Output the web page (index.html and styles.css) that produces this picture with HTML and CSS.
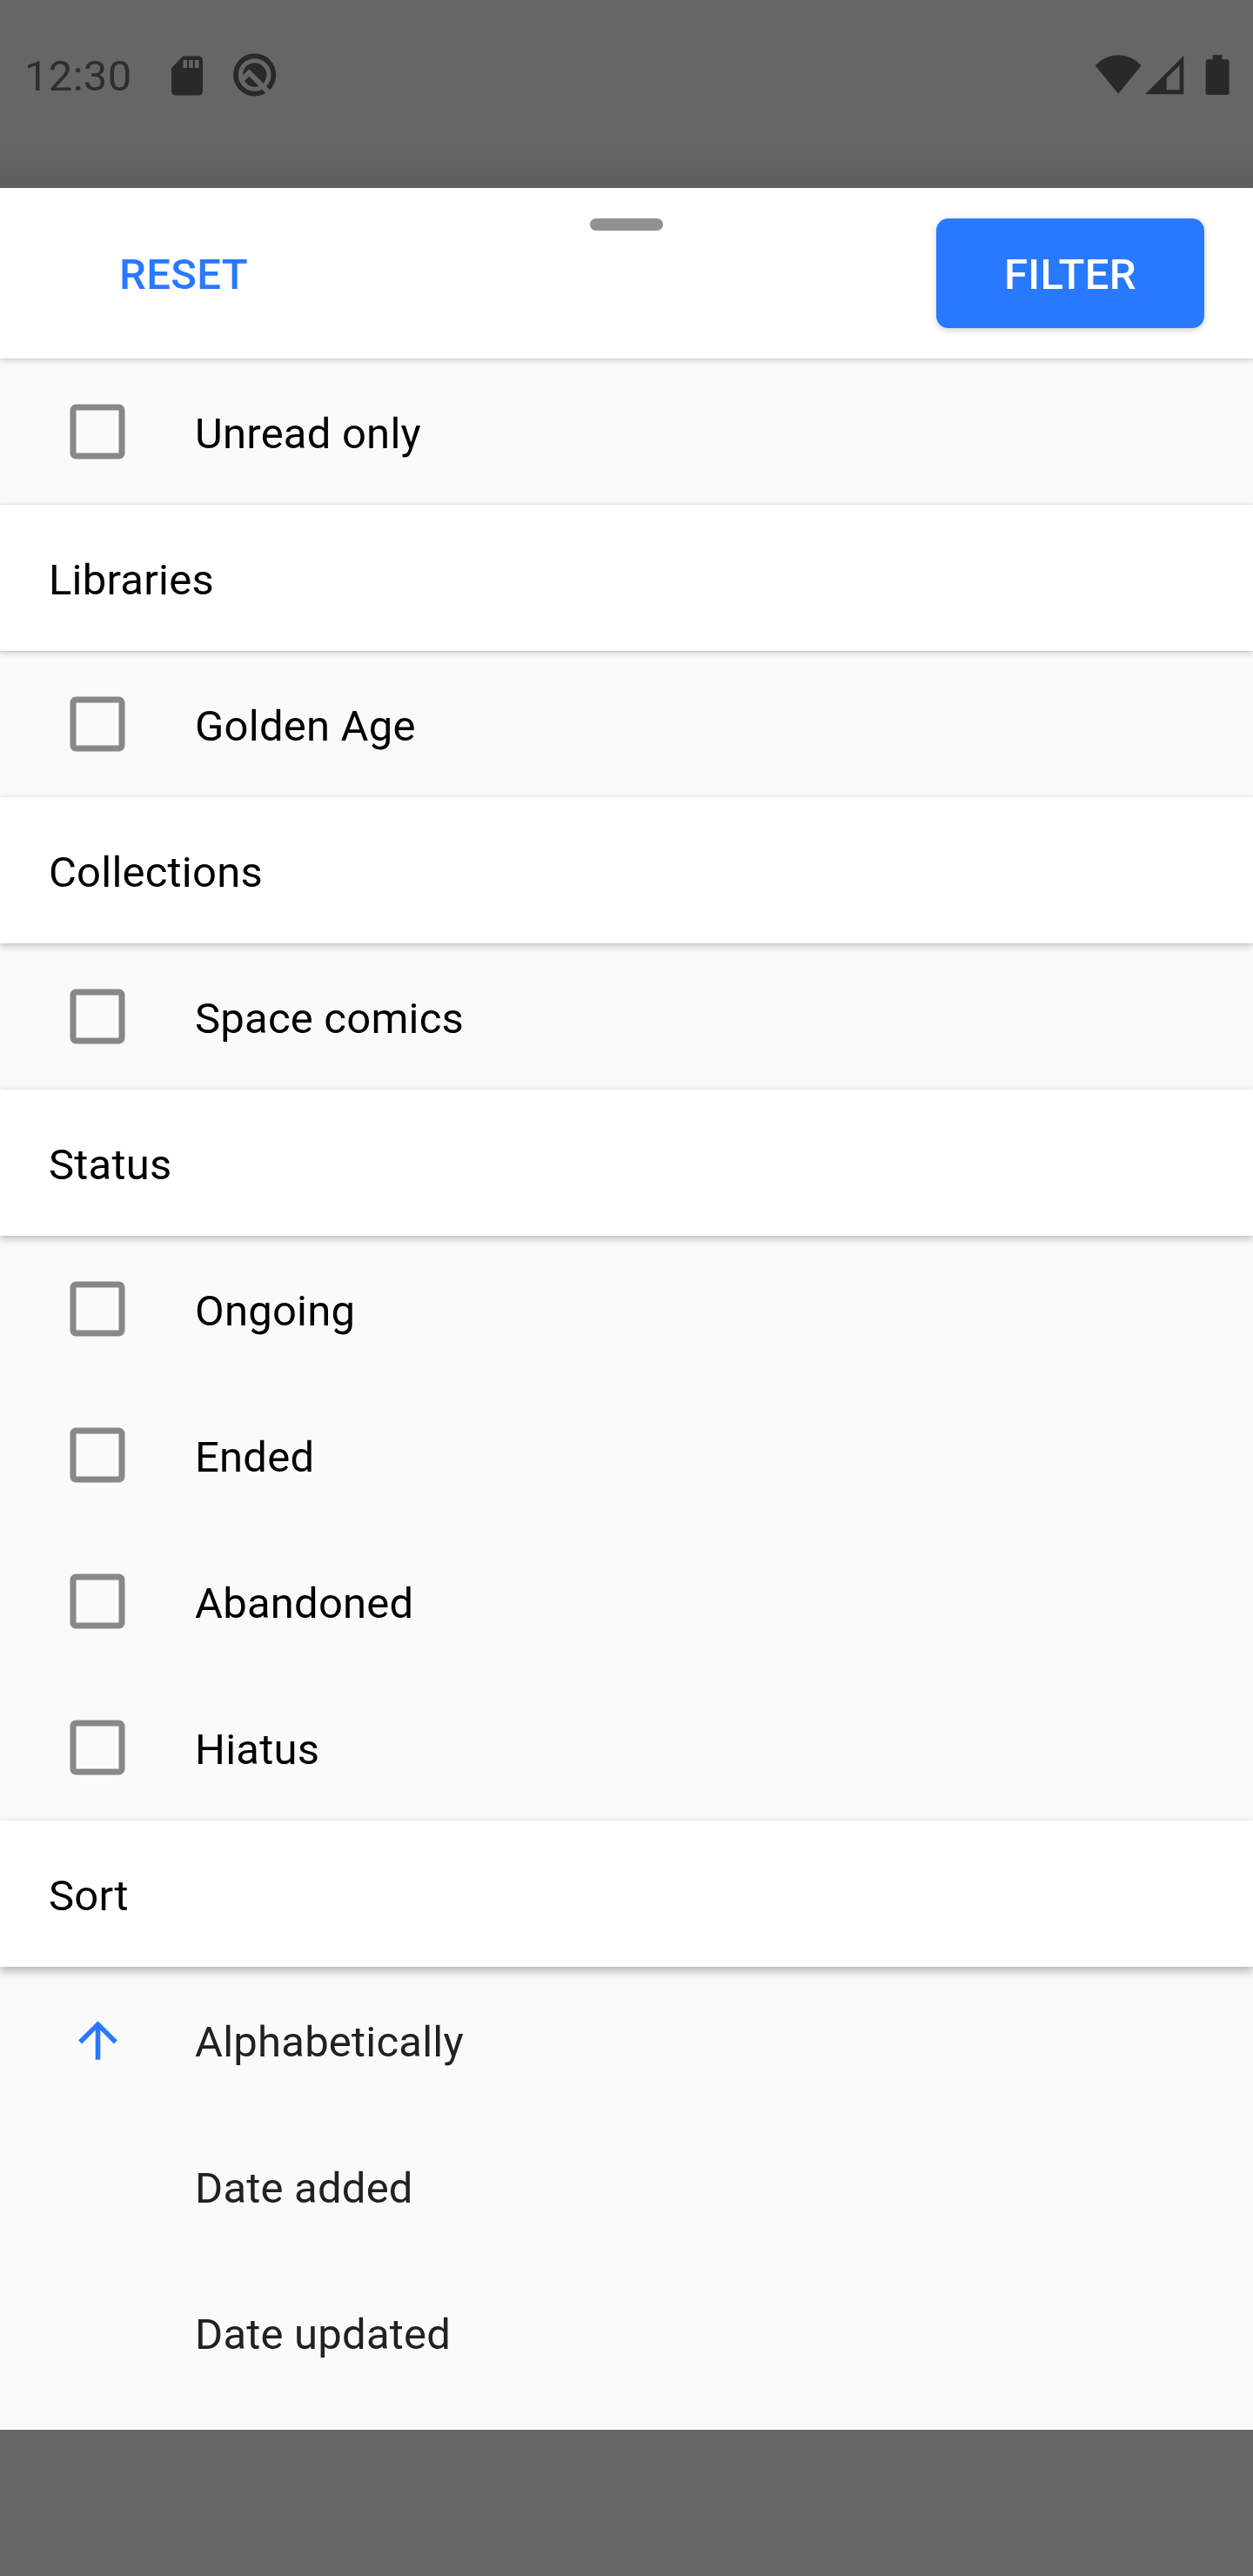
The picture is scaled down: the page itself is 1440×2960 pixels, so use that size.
FILE: index.html
```html
<!DOCTYPE html>
<html lang="en">
<head>
    <meta charset="UTF-8">
    <meta name="viewport" content="width=device-width, initial-scale=1.0">
    <title>Filter</title>
    <link rel="stylesheet" href="styles.css">
</head>

<body>
    <!--Icons used more than once-->
    <svg class="defs">
        <symbol id="checkbox" viewBox="0 0 24 24">
            <path d="M19 5v14H5V5h14m0-2H5c-1.1 0-2 .9-2 2v14c0 1.1.9 2 2 2h14c1.1 0 2-.9 2-2V5c0-1.1-.9-2-2-2z"/>
        </symbol>
    </svg>

    <div class="status-bar">
        <span class="time">12:30</span>
        <svg class="sd-icon" viewBox="0 0 24 24">
            <path d="M18 2h-8L4.02 8 4 20c0 1.1.9 2 2 2h12c1.1 0 2-.9 2-2V4c0-1.1-.9-2-2-2zm-6 6h-2V4h2v4zm3 0h-2V4h2v4zm3 0h-2V4h2v4z"/>
        </svg>
        <svg class="q-icon" viewBox="0 0 156 156">
            <circle class="ring" cx="77" cy="78" r="65"/>
            <circle cx="77" cy="78" r="41"/>
            <path class="cut" d="M34 94L58 71L124 137"/>
        </svg>
        <svg class="signal-icons" viewBox="0 0 480 150">
            <path d="M14 46A106 106 0 0 1 173 46L93.500 143z"/>
            <path fill-rule="evenodd" d="M186 145L319 12V145zM260 90V130H305V45z"/>
            <path d="M419 10H452V25H469Q476 25 476 32V140Q476 147 469 147H402Q395 147 395 140V32Q395 25 402 25H419z"/>
        </svg>
    </div>

    <div class="sheet">
        <div class="toolbar">
            <div class="handle"></div>
            <button class="reset-button">RESET</button>
            <button class="filter-button">FILTER</button>
        </div>

        <label class="row"><svg class="checkbox"><use href="#checkbox"/></svg>Unread only</label>

        <div class="section libraries">Libraries</div>
        <label class="row"><svg class="checkbox"><use href="#checkbox"/></svg>Golden Age</label>

        <div class="section collections">Collections</div>
        <label class="row"><svg class="checkbox"><use href="#checkbox"/></svg>Space comics</label>

        <div class="section status">Status</div>
        <label class="row"><svg class="checkbox"><use href="#checkbox"/></svg>Ongoing</label>
        <label class="row"><svg class="checkbox"><use href="#checkbox"/></svg>Ended</label>
        <label class="row"><svg class="checkbox"><use href="#checkbox"/></svg>Abandoned</label>
        <label class="row"><svg class="checkbox"><use href="#checkbox"/></svg>Hiatus</label>

        <div class="section sort">Sort</div>
        <div class="row sort-row">
            <svg class="arrow" viewBox="0 0 24 24">
                <path d="M4 12l1.410 1.410L11 7.830V20h2V7.830l5.580 5.590L20 12l-8-8-8 8z"/>
            </svg>
            Alphabetically
        </div>
        <div class="row sort-row no-icon">Date added</div>
        <div class="row sort-row no-icon">Date updated</div>
    </div>
</body>
</html>
```
FILE: styles.css
```css
*{
    box-sizing: border-box;
}
body{
    margin: 0;
    min-height: 2960px;
    background-color: #666666;
    font-family: Roboto, sans-serif;
    font-size: 49px;
    line-height: 58px;
    color: #000000;
}
.defs{
    display: none;
}
svg{
    flex-shrink: 0;
}

/* status bar */
.status-bar{
    display: flex;
    align-items: flex-start;
    height: 216px;
    padding-top: 60px;
    padding-left: 28px;
    background: linear-gradient(#666666 160px, #5e5e5e);
    fill: #292929;
}
.time{
    width: 160px;
    margin-top: -1px;
    color: #2e2e2e;
    letter-spacing: 0.3px;
}
.sd-icon{
    width: 54px;
    height: 54px;
}
.q-icon{
    width: 52px;
    height: 52px;
    margin-left: 24.500px;
}
.ring{
    fill: none;
    stroke: #292929;
    stroke-width: 17;
}
.cut{
    fill: none;
    stroke: #666666;
    stroke-width: 18;
}
.signal-icons{
    width: 160px;
    height: 50px;
    margin-left: auto;
    margin-right: 26px;
}

/* bottom sheet */
.sheet{
    height: 2576px;
    background-color: #fafafa;
    overflow: hidden;
}
.toolbar{
    position: relative;
    display: flex;
    justify-content: space-between;
    align-items: flex-start;
    height: 196px;
    padding: 35px 56px 0 84px;
    background-color: #ffffff;
    box-shadow: 0 2px 8px rgba(0,0,0,0.16), 0 1px 1px rgba(0,0,0,0.06);
}
.handle{
    position: absolute;
    top: 35px;
    left: 678px;
    width: 84px;
    height: 14px;
    border-radius: 7px;
    background-color: #919191;
}
button{
    height: 126px;
    border: none;
    padding: 4px 0 0;
    font: 500 49px/58px Roboto, sans-serif;
    letter-spacing: 0.4px;
    cursor: pointer;
}
.reset-button{
    width: 254px;
    background-color: transparent;
    color: #2979ff;
}
.filter-button{
    width: 308px;
    border-radius: 14px;
    background-color: #2979ff;
    color: #ffffff;
    box-shadow: 0 2px 7px rgba(0,0,0,0.2);
}
.section{
    position: relative;
    height: 168px;
    padding: 58px 56px 0;
    background-color: #ffffff;
    letter-spacing: 0.22px;
}
.libraries{
    box-shadow: 0 2px 7px rgba(0,0,0,0.2), 0 0 2px rgba(0,0,0,0.12);
}
.collections{
    box-shadow: 0 3px 8px rgba(0,0,0,0.22), 0 0 2px rgba(0,0,0,0.08);
}
.status{
    box-shadow: 0 3px 9px rgba(0,0,0,0.26), 0 0 2px rgba(0,0,0,0.05);
}
.sort{
    box-shadow: 0 5px 10px rgba(0,0,0,0.28), 0 0 2px rgba(0,0,0,0.04);
}
.row{
    display: flex;
    height: 168px;
    padding: 58px 0 0 70px;
    letter-spacing: 0.22px;
}
.checkbox{
    width: 84px;
    height: 84px;
    margin-top: -16px;
    margin-right: 70px;
    fill: #888888;
}
.sort-row{
    color: #212121;
}
.arrow{
    width: 67px;
    height: 67px;
    margin: -7px 78.500px 0 8.500px;
    fill: #2979ff;
}
.no-icon{
    padding-left: 224px;
}
```
